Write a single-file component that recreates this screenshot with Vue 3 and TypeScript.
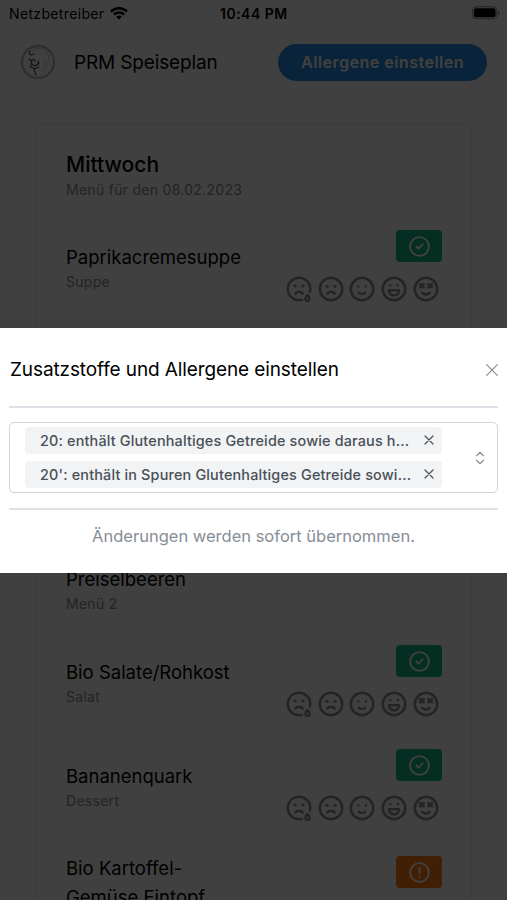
<script setup lang="ts">
import { ref } from 'vue'

type Status = 'ok' | 'warn'

interface Dish {
  name: string
  category: string
  status?: Status
  layout: string
}

const dishes: Dish[] = [
  { name: 'Paprikacremesuppe', category: 'Suppe', status: 'ok', layout: 'regular' },
  { name: 'Preiselbeeren', category: 'Menü 2', layout: 'tall' },
  { name: 'Bio Salate/Rohkost', category: 'Salat', status: 'ok', layout: 'regular' },
  { name: 'Bananenquark', category: 'Dessert', status: 'ok', layout: 'regular' },
  { name: 'Bio Kartoffel-Gemüse Eintopf', category: '', status: 'warn', layout: 'wrapped' },
]

const moods: string[][] = [
  [
    'M20.8 14A9 9 0 1 0 14.4 20.7',
    'M8.4 9.3l.9 .5M15.6 9.3l-.9 .5',
    'M9 15.6q3 -2.8 6 0',
    'M18.8 16.8c-2.8 3.4 -1.4 4.8 0 4.8s2.8 -1.4 0 -4.8z',
  ],
  ['M21 12a9 9 0 1 1 -18 0a9 9 0 1 1 18 0', 'M8.4 9.8l.8 .2M15.6 9.8l-.8 .2', 'M9 15.6q3 -2.8 6 0'],
  ['M21 12a9 9 0 1 1 -18 0a9 9 0 1 1 18 0', 'M9 10h.01M15 10h.01', 'M9.5 15a3.5 3.5 0 0 0 5 0'],
  [
    'M21 12a9 9 0 1 1 -18 0a9 9 0 1 1 18 0',
    'M9 9h.01M15 9h.01',
    'M8 13h8v.5a4 3.5 0 0 1 -8 0z',
  ],
  [
    'M21 12a9 9 0 1 1 -18 0a9 9 0 1 1 18 0',
    'M9 15.2q3 2.2 6 0',
    'M7.2 8l3 2.6M7.2 10.6l3 -2.6M13.8 8l3 2.6M13.8 10.6l3 -2.6',
  ],
]

const selected = ref<string[]>([
  '20: enthält Glutenhaltiges Getreide sowie daraus h...',
  "20': enthält in Spuren Glutenhaltiges Getreide sowi...",
])

const open = ref(true)

function remove(index: number) {
  selected.value.splice(index, 1)
}
</script>

<template>
  <div class="screen">
    <div class="statusbar">
      <span class="carrier">Netzbetreiber</span>
      <svg class="wifi" viewBox="0 0 18 13">
        <path d="M1 4.6a11.4 11.4 0 0 1 16 0" />
        <path d="M3.9 7.7a7.3 7.3 0 0 1 10.2 0" />
        <path class="dot" d="M9 12.6L6.2 9.8a4 4 0 0 1 5.6 0z" />
      </svg>
      <span class="time">10:44 PM</span>
      <svg class="battery" viewBox="0 0 29 14">
        <rect class="shell" x=".6" y=".6" width="25" height="12.4" rx="3.6" />
        <rect x="2" y="2.2" width="22.4" height="9.2" rx="2" />
        <path d="M27 5v4q1.4 -.6 1.4 -2t-1.4 -2z" class="cap" />
      </svg>
    </div>

    <header class="header">
      <svg class="avatar" viewBox="0 0 36 36">
        <circle cx="18" cy="18" r="16" />
        <path class="hair" d="M13 6q7 -4 12 1q5 4 3 11q-1 8 -7 13M24 15q2 5 -1 10" />
        <path d="M10 7q-2 3 1 4l3 -1M9 15l3 2l-1 3l4 2l4 -3M10 22l4 3l5 -2M14 25l2 6M13 15l2 2M18 17l1 3" />
      </svg>
      <h1 class="brand">PRM Speiseplan</h1>
      <button class="allergens" type="button" @click="open = true">Allergene einstellen</button>
    </header>

    <main class="card">
      <h2 class="day">Mittwoch</h2>
      <p class="date">Menü für den 08.02.2023</p>
      <section v-for="dish in dishes" :key="dish.name" class="dish" :class="dish.layout">
        <div class="info">
          <h3 class="name">{{ dish.name }}</h3>
          <p v-if="dish.category" class="category">{{ dish.category }}</p>
        </div>
        <div v-if="dish.status" class="actions">
          <span class="badge" :class="dish.status">
            <svg viewBox="0 0 24 24">
              <circle cx="12" cy="12" r="9" />
              <path v-if="dish.status === 'ok'" d="M9 12l2 2l4 -4" />
              <path v-else d="M12 7.5v5M12 16v.01" />
            </svg>
          </span>
          <div class="moods">
            <svg v-for="(paths, i) in moods" :key="i" viewBox="0 0 24 24">
              <path v-for="d in paths" :key="d" :d="d" />
            </svg>
          </div>
        </div>
      </section>
    </main>

    <div v-if="open" class="overlay">
      <div class="modal" role="dialog">
        <div class="modal-head">
          <h2 class="modal-title">Zusatzstoffe und Allergene einstellen</h2>
          <svg class="close" viewBox="0 0 12 12" @click="open = false"><path d="M.6 .6l10.8 10.8M11.4 .6L.6 11.4" /></svg>
        </div>
        <div class="select">
          <div class="chips">
            <div v-for="(label, i) in selected" :key="label" class="chip">
              <span>{{ label }}</span>
              <svg class="remove" viewBox="0 0 10 10" @click="remove(i)"><path d="M1 1l8 8M9 1L1 9" /></svg>
            </div>
          </div>
          <svg class="chevrons" viewBox="0 0 10 14"><path d="M1.5 4.7L5 1.3l3.5 3.4M1.5 9.3L5 12.7l3.5 -3.4" /></svg>
        </div>
        <p class="note">Änderungen werden sofort übernommen.</p>
      </div>
    </div>
  </div>
</template>

<style>
body {
  margin: 0;
  overflow: hidden;
}
</style>

<style scoped>
* {
  box-sizing: border-box;
}
h1, h2, h3, p {
  margin: 0;
  font-weight: 400;
}
svg {
  display: block;
  flex: none;
  fill: none;
  stroke: currentColor;
  stroke-linecap: round;
  stroke-linejoin: round;
}
.screen {
  position: relative;
  height: 900px;
  overflow: hidden;
  background: #fff;
  color: #000;
  font-family: Inter, 'Liberation Sans', sans-serif;
}
.statusbar {
  display: grid;
  grid-template-columns: auto 18px 1fr 28px;
  align-items: center;
  height: 28px;
  padding: 0 7px 2px 9px;
  font-size: 14px;
}
.carrier {
  width: 101px;
  letter-spacing: .35px;
}
.wifi {
  width: 18px;
  height: 13px;
  stroke-width: 2.5;
  stroke-linecap: butt;
}
.wifi .dot {
  fill: #000;
  stroke: none;
}
.time {
  padding-left: 92px;
  font-weight: 600;
  letter-spacing: .5px;
}
.battery {
  width: 28px;
  height: 14px;
  fill: #000;
  stroke: none;
}
.battery .shell {
  fill: none;
  stroke: #888;
}
.battery .cap {
  fill: #888;
}
.header {
  display: flex;
  align-items: center;
  height: 68px;
  padding: 0 20px;
}
.avatar {
  width: 36px;
  height: 36px;
  stroke: #444;
  stroke-width: 1.1;
}
.avatar circle {
  stroke: #bbb;
  stroke-width: 2.4;
}
.avatar .hair {
  stroke: #d4d4d4;
}
.brand {
  flex: 1;
  padding-left: 18px;
  font-size: 19px;
  letter-spacing: -.15px;
  white-space: nowrap;
}
.allergens {
  width: 209px;
  height: 37px;
  padding: 0;
  border: 0;
  border-radius: 19px;
  background: #228be6;
  color: #fff;
  font: 600 16.3px Inter, sans-serif;
  letter-spacing: .36px;
  white-space: nowrap;
}
.card {
  width: 437px;
  height: 850px;
  margin: 27px 0 0 35px;
  padding: 27px 29px 0 30px;
  border: 1px solid #e9ecef;
  border-radius: 6px;
}
.day {
  height: 28px;
  font-size: 21px;
  font-weight: 500;
  line-height: 28px;
}
.date, .category {
  height: 22px;
  color: #868e96;
  font-size: 14px;
  line-height: 22px;
  letter-spacing: .28px;
}
.date {
  margin-bottom: 13px;
}
.dish {
  display: flex;
  justify-content: space-between;
  height: 104px;
  border-bottom: 1px solid #eceef0;
}
.info {
  padding-top: 29px;
}
.name {
  font-size: 18.5px;
  line-height: 28px;
}
.tall {
  height: 311px;
}
.tall .info {
  padding-top: 247px;
}
.wrapped .info {
  width: 165px;
  padding-top: 17px;
}
.wrapped .name {
  line-height: 29px;
}
.actions {
  display: flex;
  flex-direction: column;
  align-items: flex-end;
  padding-top: 16px;
}
.wrapped .actions {
  padding-top: 19px;
}
.badge {
  display: grid;
  place-items: center;
  width: 46px;
  height: 32px;
  border-radius: 4px;
  color: #fff;
}
.badge svg {
  width: 25px;
  height: 25px;
  stroke-width: 1.9;
}
.ok {
  background: #12b886;
}
.warn {
  background: #fd7e14;
}
.moods {
  display: flex;
  gap: 1.8px;
  padding: 12px 1px 0 0;
  color: #868e96;
}
.moods svg {
  width: 30px;
  height: 30px;
  stroke-width: 2;
}
.overlay {
  position: absolute;
  inset: 0;
  display: flex;
  align-items: flex-start;
  padding-top: 328px;
  background: rgba(0, 0, 0, .75);
}
.modal {
  width: 100%;
  height: 245px;
  padding: 0 9px;
  background: #fff;
}
.modal-head {
  display: flex;
  align-items: center;
  justify-content: space-between;
  height: 80px;
  padding: 5px 0 0 1px;
  border-bottom: 2px solid #dee2e6;
}
.modal-title {
  font-size: 19px;
  letter-spacing: -.11px;
  white-space: nowrap;
}
.close {
  width: 12px;
  height: 12px;
  color: #868e96;
  stroke-width: 1.2;
}
.select {
  display: flex;
  justify-content: space-between;
  align-items: center;
  height: 71px;
  margin: 14px 0 15px;
  padding: 0 12px 0 15px;
  border: 1px solid #ced4da;
  border-radius: 5px;
}
.chips {
  display: grid;
  gap: 7px;
}
.chip {
  display: flex;
  align-items: center;
  justify-content: space-between;
  width: 417px;
  height: 27px;
  padding: 0 8px 1px 15px;
  border-radius: 4px;
  background: #f1f3f5;
  color: #495057;
  font-size: 14.4px;
  font-weight: 500;
  letter-spacing: .17px;
  white-space: nowrap;
}
.remove {
  width: 10px;
  height: 10px;
  stroke-width: 1.2;
}
.chevrons {
  width: 10px;
  height: 14px;
  color: #868e96;
  stroke-width: 1.2;
}
.note {
  height: 57px;
  border-top: 2px solid #dee2e6;
  color: #868e96;
  font-size: 16.5px;
  line-height: 53px;
  text-align: center;
}
</style>
